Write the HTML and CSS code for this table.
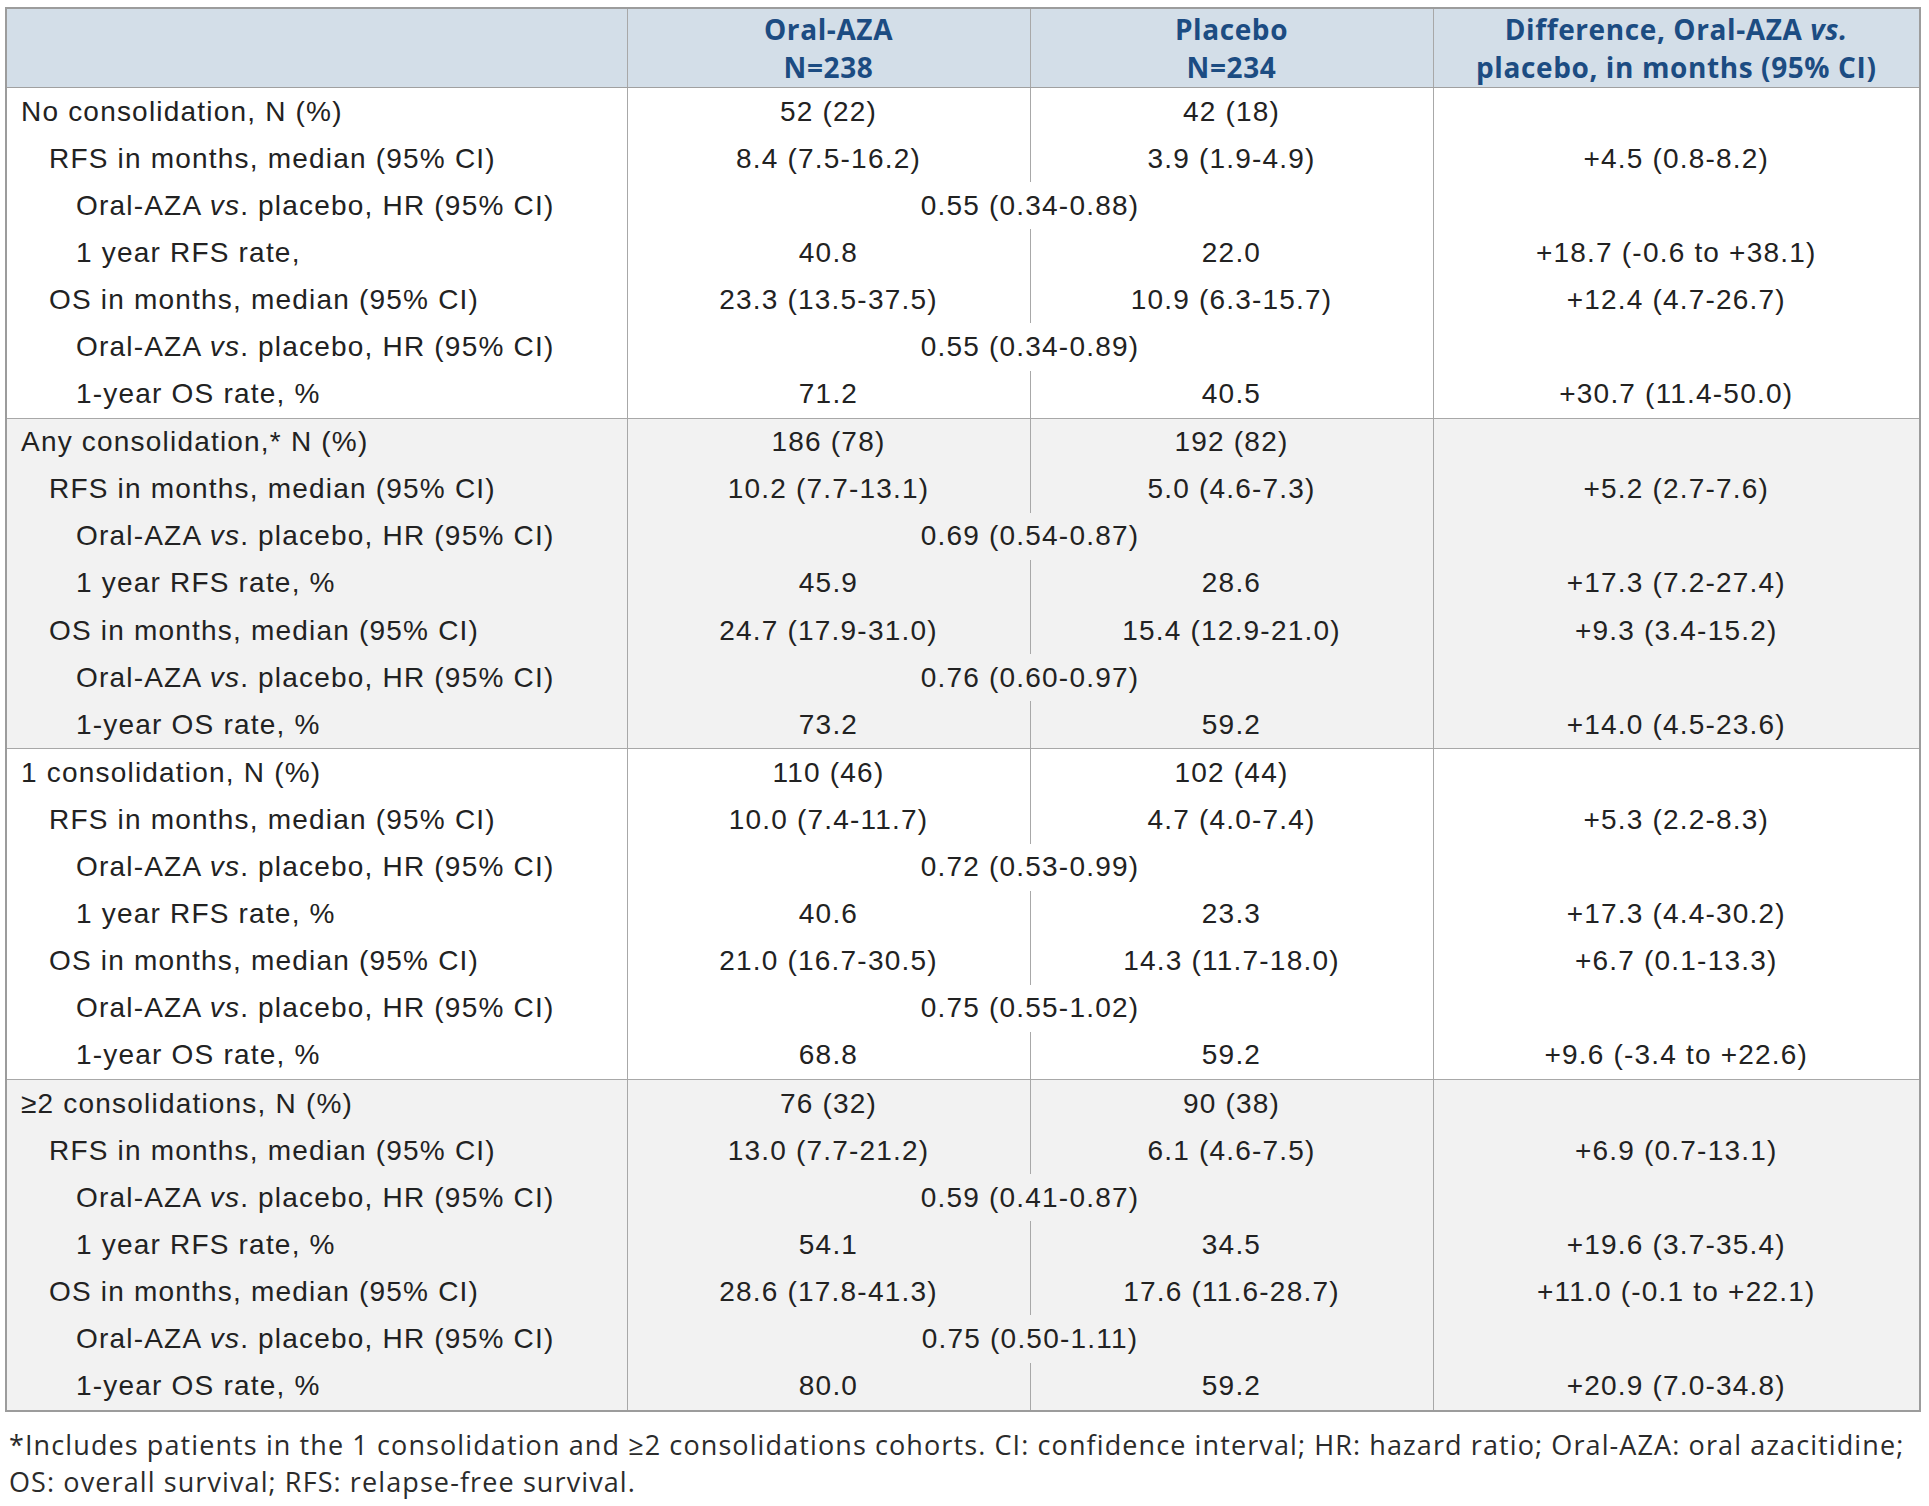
FILE: index.html
```html
<!DOCTYPE html>
<html lang="en">
<head>
<meta charset="utf-8">
<title>Oral-AZA consolidation table</title>
<link rel="stylesheet" href="styles.css">
</head>
<body>
<div class="page">
<table class="data">
  <colgroup>
    <col class="c1"><col class="c2"><col class="c3"><col class="c4">
  </colgroup>
  <thead>
    <tr>
      <th></th>
      <th>Oral-AZA<br>N=238</th>
      <th>Placebo<br>N=234</th>
      <th>Difference, Oral-AZA <i>vs.</i><br>placebo, in months (95% CI)</th>
    </tr>
  </thead>
  <tbody class="grp">
    <tr><td class="l0">No consolidation, N (%)</td><td>52 (22)</td><td>42 (18)</td><td></td></tr>
    <tr><td class="l1">RFS in months, median (95% CI)</td><td>8.4 (7.5-16.2)</td><td>3.9 (1.9-4.9)</td><td>+4.5 (0.8-8.2)</td></tr>
    <tr><td class="l2">Oral-AZA <i>vs</i>. placebo, HR (95% CI)</td><td colspan="2">0.55 (0.34-0.88)</td><td></td></tr>
    <tr><td class="l2">1 year RFS rate,</td><td>40.8</td><td>22.0</td><td>+18.7 (-0.6 to +38.1)</td></tr>
    <tr><td class="l1">OS in months, median (95% CI)</td><td>23.3 (13.5-37.5)</td><td>10.9 (6.3-15.7)</td><td>+12.4 (4.7-26.7)</td></tr>
    <tr><td class="l2">Oral-AZA <i>vs</i>. placebo, HR (95% CI)</td><td colspan="2">0.55 (0.34-0.89)</td><td></td></tr>
    <tr><td class="l2">1-year OS rate, %</td><td>71.2</td><td>40.5</td><td>+30.7 (11.4-50.0)</td></tr>
  </tbody>
  <tbody class="grp alt">
    <tr><td class="l0">Any consolidation,* N (%)</td><td>186 (78)</td><td>192 (82)</td><td></td></tr>
    <tr><td class="l1">RFS in months, median (95% CI)</td><td>10.2 (7.7-13.1)</td><td>5.0 (4.6-7.3)</td><td>+5.2 (2.7-7.6)</td></tr>
    <tr><td class="l2">Oral-AZA <i>vs</i>. placebo, HR (95% CI)</td><td colspan="2">0.69 (0.54-0.87)</td><td></td></tr>
    <tr><td class="l2">1 year RFS rate, %</td><td>45.9</td><td>28.6</td><td>+17.3 (7.2-27.4)</td></tr>
    <tr><td class="l1">OS in months, median (95% CI)</td><td>24.7 (17.9-31.0)</td><td>15.4 (12.9-21.0)</td><td>+9.3 (3.4-15.2)</td></tr>
    <tr><td class="l2">Oral-AZA <i>vs</i>. placebo, HR (95% CI)</td><td colspan="2">0.76 (0.60-0.97)</td><td></td></tr>
    <tr><td class="l2">1-year OS rate, %</td><td>73.2</td><td>59.2</td><td>+14.0 (4.5-23.6)</td></tr>
  </tbody>
  <tbody class="grp">
    <tr><td class="l0">1 consolidation, N (%)</td><td>110 (46)</td><td>102 (44)</td><td></td></tr>
    <tr><td class="l1">RFS in months, median (95% CI)</td><td>10.0 (7.4-11.7)</td><td>4.7 (4.0-7.4)</td><td>+5.3 (2.2-8.3)</td></tr>
    <tr><td class="l2">Oral-AZA <i>vs</i>. placebo, HR (95% CI)</td><td colspan="2">0.72 (0.53-0.99)</td><td></td></tr>
    <tr><td class="l2">1 year RFS rate, %</td><td>40.6</td><td>23.3</td><td>+17.3 (4.4-30.2)</td></tr>
    <tr><td class="l1">OS in months, median (95% CI)</td><td>21.0 (16.7-30.5)</td><td>14.3 (11.7-18.0)</td><td>+6.7 (0.1-13.3)</td></tr>
    <tr><td class="l2">Oral-AZA <i>vs</i>. placebo, HR (95% CI)</td><td colspan="2">0.75 (0.55-1.02)</td><td></td></tr>
    <tr><td class="l2">1-year OS rate, %</td><td>68.8</td><td>59.2</td><td>+9.6 (-3.4 to +22.6)</td></tr>
  </tbody>
  <tbody class="grp alt">
    <tr><td class="l0">≥2 consolidations, N (%)</td><td>76 (32)</td><td>90 (38)</td><td></td></tr>
    <tr><td class="l1">RFS in months, median (95% CI)</td><td>13.0 (7.7-21.2)</td><td>6.1 (4.6-7.5)</td><td>+6.9 (0.7-13.1)</td></tr>
    <tr><td class="l2">Oral-AZA <i>vs</i>. placebo, HR (95% CI)</td><td colspan="2">0.59 (0.41-0.87)</td><td></td></tr>
    <tr><td class="l2">1 year RFS rate, %</td><td>54.1</td><td>34.5</td><td>+19.6 (3.7-35.4)</td></tr>
    <tr><td class="l1">OS in months, median (95% CI)</td><td>28.6 (17.8-41.3)</td><td>17.6 (11.6-28.7)</td><td>+11.0 (-0.1 to +22.1)</td></tr>
    <tr><td class="l2">Oral-AZA <i>vs</i>. placebo, HR (95% CI)</td><td colspan="2">0.75 (0.50-1.11)</td><td></td></tr>
    <tr><td class="l2">1-year OS rate, %</td><td>80.0</td><td>59.2</td><td>+20.9 (7.0-34.8)</td></tr>
  </tbody>
</table>
<p class="note">*Includes patients in the 1 consolidation and ≥2 consolidations cohorts. CI: confidence interval; HR: hazard ratio; Oral-AZA: oral azacitidine;<br>OS: overall survival; RFS: relapse-free survival.</p>
</div>
</body>
</html>
```
FILE: styles.css
```css
html, body {
  margin: 0;
  padding: 0;
  background: #ffffff;
}

.page {
  padding: 7px 10px 0 5px;
}

.data {
  border-collapse: collapse;
  table-layout: fixed;
  width: 1914px;
  border: 2px solid #9c9c9c;
  font-family: "Liberation Sans", Arial, sans-serif;
  font-size: 28px;
  letter-spacing: 1.2px;
  color: #222222;
}

.c1 { width: 621px; }
.c2 { width: 403px; }
.c3 { width: 403px; }
.c4 { width: 487px; }

.data th {
  background: #d3dee8;
  color: #1c4c82;
  font-family: "Open Sans", "Liberation Sans", sans-serif;
  font-weight: 700;
  font-size: 28px;
  letter-spacing: 0.6px;
  line-height: 38px;
  height: 78px;
  padding: 0 6px;
  text-align: center;
  vertical-align: middle;
  border: 1px solid #a8a8a8;
  border-bottom-color: #a0a0a0;
}

.data td {
  height: 47.1px;
  padding: 0 10px;
  line-height: 30px;
  text-align: center;
  vertical-align: middle;
  border-left: 1px solid #a8a8a8;
  border-right: 1px solid #a8a8a8;
  white-space: nowrap;
}

.data td.l0 { text-align: left; padding-left: 14px; }
.data td.l1 { text-align: left; padding-left: 42px; }
.data td.l2 { text-align: left; padding-left: 69px; }

.grp {
  border-top: 1px solid #a8a8a8;
}

.alt td {
  background: #f2f2f2;
}

.note {
  margin: 14px 0 0 4px;
  font-family: "Open Sans", "Liberation Sans", sans-serif;
  font-size: 27px;
  line-height: 37px;
  color: #2b2b2b;
  letter-spacing: 1.1px;
  white-space: nowrap;
}
```
